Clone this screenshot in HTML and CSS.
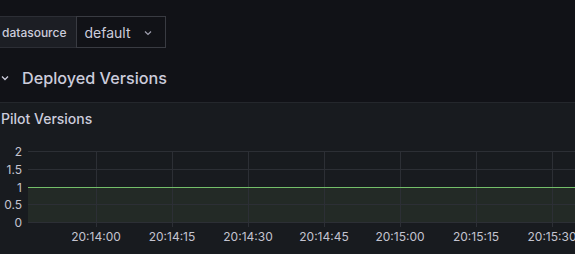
FILE: index.html
```html
<!DOCTYPE html>
<html lang="en">
<head>
    <meta charset="UTF-8">
    <meta name="viewport" content="width=device-width, initial-scale=1.0">
    <title>Deployed Versions</title>

    <link rel="stylesheet" href="styles.css">
</head>
<body>
    <div class="variables">
        <label class="var-label">datasource</label>
        <div class="var-select">
            <span>default</span>
            <svg class="chevron" width="10" height="10" viewBox="0 0 10 10">
                <path d="M2 3.5 L5 6.5 L8 3.5" fill="none" stroke="#a0a0b0" stroke-width="1.2"/>
            </svg>
        </div>
    </div>

    <div class="row">
        <svg class="row-chevron" width="10" height="10" viewBox="0 0 10 10">
            <path d="M2 3.5 L5 6.5 L8 3.5" fill="none" stroke="#ccccdc" stroke-width="1.3"/>
        </svg>
        <h2 class="row-title">Deployed Versions</h2>
    </div>

    <div class="panel">
        <h3 class="panel-title">Pilot Versions</h3>

        <svg class="chart" width="575" height="120" viewBox="0 0 575 120">
            <!-- fill under the series -->
            <rect x="28" y="53" width="547" height="35" fill="#232a26"/>

            <g stroke="#2c2f35" stroke-width="1">
                <line x1="28" y1="17.5" x2="575" y2="17.5"/>
                <line x1="28" y1="35.5" x2="575" y2="35.5"/>
                <line x1="28" y1="70.5" x2="575" y2="70.5"/>
                <line x1="28" y1="88.5" x2="575" y2="88.5"/>

                <line x1="96.5" y1="17" x2="96.5" y2="93"/>
                <line x1="172.5" y1="17" x2="172.5" y2="93"/>
                <line x1="248.5" y1="17" x2="248.5" y2="93"/>
                <line x1="324.5" y1="17" x2="324.5" y2="93"/>
                <line x1="400.5" y1="17" x2="400.5" y2="93"/>
                <line x1="476.5" y1="17" x2="476.5" y2="93"/>
                <line x1="552.5" y1="17" x2="552.5" y2="93"/>
            </g>

            <line x1="28" y1="53.5" x2="575" y2="53.5" stroke="#73bf69" stroke-width="1"/>

            <g class="axis" text-anchor="end">
                <text x="22" y="21.5">2</text>
                <text x="22" y="39.5">1.5</text>
                <text x="22" y="57.5">1</text>
                <text x="22" y="74.5">0.5</text>
                <text x="22" y="92.5">0</text>
            </g>

            <g class="axis" text-anchor="middle">
                <text x="96" y="107">20:14:00</text>
                <text x="172" y="107">20:14:15</text>
                <text x="248" y="107">20:14:30</text>
                <text x="324" y="107">20:14:45</text>
                <text x="400" y="107">20:15:00</text>
                <text x="476" y="107">20:15:15</text>
                <text x="552" y="107">20:15:30</text>
            </g>
        </svg>
    </div>
</body>
</html>
```

FILE: styles.css
```css
body {
    margin: 0;
    overflow: hidden;

    background-color: #111217;
    color: #ccccdc;

    font-family: Inter, "Noto Sans", sans-serif;
}

.variables {
    display: flex;
    padding-top: 16px;
    margin-left: -7px;
}

.var-label {
    display: flex;
    align-items: center;
    height: 32px;
    padding: 0 9px 0 8px;
    box-sizing: border-box;

    background-color: #1c1e24;
    border: 1px solid #2c2e35;
    border-right: none;

    font-size: 12px;
    font-weight: 500;
}

.var-select {
    display: flex;
    align-items: center;
    gap: 12px;
    height: 32px;
    padding: 0 12px 0 8px;
    box-sizing: border-box;

    border: 1px solid #393b42;

    font-size: 14px;
}

.chevron {
    margin-top: 1px;
}

.row {
    display: flex;
    align-items: center;
    gap: 12px;
    height: 32px;
    margin-top: 14px;
}

.row-title {
    margin: 0;

    font-size: 16.2px;
    font-weight: 500;
}

.panel {
    margin-top: 8px;

    background-color: #181b1f;
    border-top: 1px solid #24272c;
}

.panel-title {
    display: flex;
    align-items: center;
    height: 31px;
    margin: 0;
    padding-left: 1px;

    font-size: 14px;
    font-weight: 500;
}

.chart {
    display: block;
}

.axis text {
    fill: #c4c4d0;
    font-size: 12px;
    font-family: Inter, "Noto Sans", sans-serif;
}
```
